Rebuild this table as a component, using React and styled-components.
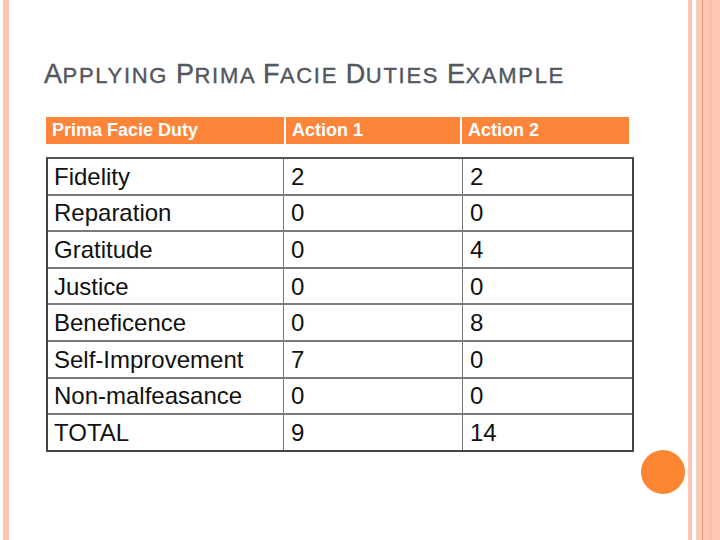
import React from "react";
import styled, { createGlobalStyle } from "styled-components";

const Global = createGlobalStyle`
  html, body { margin: 0; padding: 0; background: #ffffff; }
  * { box-sizing: border-box; }
`;

const Slide = styled.div`
  position: relative;
  width: 720px;
  height: 540px;
  display: flex;
  background: #ffffff;
  overflow: hidden;
  font-family: "Liberation Sans", Arial, sans-serif;
`;

const LeftBar = styled.div`
  width: 6px;
  margin-left: 3px;
  height: 100%;
  background: #f9c6b2;
`;

const Content = styled.div`
  flex: 1;
  padding: 61px 0 0 35px;
  display: flex;
  flex-direction: column;
`;

const RightDecor = styled.div`
  width: 32px;
  height: 100%;
  display: flex;
`;

const Stripe = styled.div`
  width: ${(p) => p.$w}px;
  height: 100%;
  background: ${(p) => p.$c};
`;

const Title = styled.h1`
  margin: 0;
  font-size: 22px;
  line-height: 27px;
  font-weight: 400;
  color: #53575e;
  letter-spacing: 1.7px;
  white-space: nowrap;
  -webkit-text-stroke: 0.4px #53575e;
`;

const Big = styled.span`
  font-size: 27px;
  letter-spacing: 0.5px;
`;

const HeaderRow = styled.div`
  margin-top: 28px;
  margin-left: 2px;
  display: grid;
  grid-template-columns: 238px 174px 167px;
  column-gap: 2px;
  height: 27px;
`;

const HeadCell = styled.div`
  background: #fd853a;
  color: #ffffff;
  font-weight: 700;
  font-size: 18px;
  display: flex;
  align-items: center;
  padding-left: 6px;
`;

const Table = styled.div`
  margin-top: 13px;
  margin-left: 2px;
  width: 588px;
  border-top: 2px solid #555;
  border-left: 2px solid #444;
  border-right: 2px solid #444;
  display: flex;
  flex-direction: column;
`;

const Row = styled.div`
  display: grid;
  grid-template-columns: 236px 179px 1fr;
  height: 36.6px;
  border-bottom: 2px solid ${(p) => (p.$last ? "#444" : "#7a7a7a")};
`;

const Cell = styled.div`
  display: flex;
  align-items: center;
  padding-left: ${(p) => (p.$first ? 6 : 7)}px;
  padding-top: 1px;
  font-size: 24px;
  color: #111;
  border-right: ${(p) => (p.$end ? "none" : "1.5px solid #777")};
`;

const Dot = styled.div`
  position: absolute;
  left: 641px;
  top: 450px;
  width: 44px;
  height: 44px;
  border-radius: 50%;
  background: #fd8632;
`;

const rows = [
  ["Fidelity", "2", "2"],
  ["Reparation", "0", "0"],
  ["Gratitude", "0", "4"],
  ["Justice", "0", "0"],
  ["Beneficence", "0", "8"],
  ["Self-Improvement", "7", "0"],
  ["Non-malfeasance", "0", "0"],
  ["TOTAL", "9", "14"],
];

export default function App() {
  return (
    <>
      <Global />
      <Slide>
        <LeftBar />
        <Content>
          <Title>
            <Big>A</Big>PPLYING <Big>P</Big>RIMA <Big>F</Big>ACIE <Big>D</Big>UTIES <Big>E</Big>XAMPLE
          </Title>
          <HeaderRow>
            <HeadCell>Prima Facie Duty</HeadCell>
            <HeadCell>Action 1</HeadCell>
            <HeadCell>Action 2</HeadCell>
          </HeaderRow>
          <Table>
            {rows.map((r, i) => (
              <Row key={r[0]} $last={i === rows.length - 1}>
                <Cell $first>{r[0]}</Cell>
                <Cell>{r[1]}</Cell>
                <Cell $end>{r[2]}</Cell>
              </Row>
            ))}
          </Table>
        </Content>
        <RightDecor>
          <Stripe $w={4} $c="#f9c6b2" />
          <Stripe $w={4} $c="#ffffff" />
          <Stripe $w={6} $c="#fbcdb9" />
          <Stripe $w={1} $c="#e59874" />
          <Stripe $w={6} $c="#fcc6b1" />
          <Stripe $w={3} $c="#f9bca6" />
          <Stripe $w={8} $c="#fdc7b3" />
        </RightDecor>
        <Dot />
      </Slide>
    </>
  );
}
